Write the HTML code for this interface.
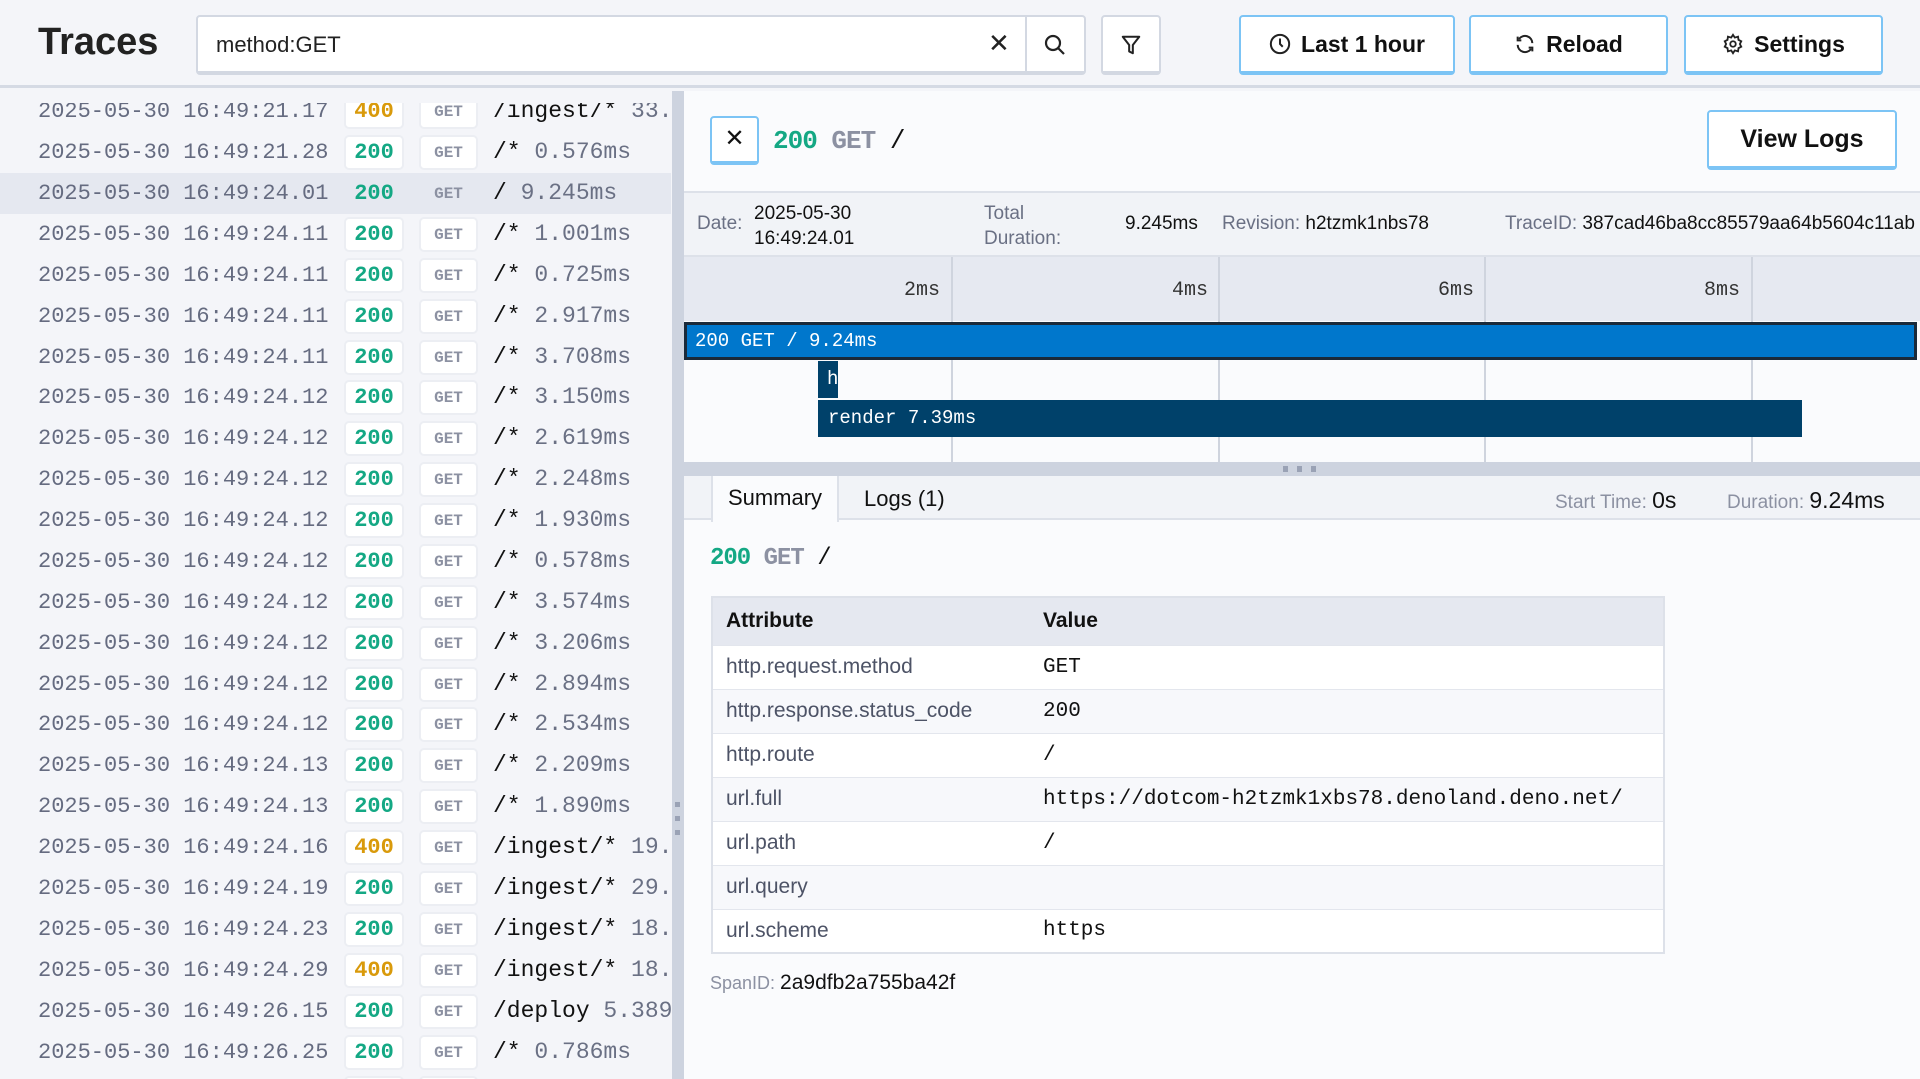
<!DOCTYPE html>
<html><head><meta charset="utf-8"><style>
*{box-sizing:border-box;margin:0;padding:0}
body{width:1920px;height:1079px;overflow:hidden;background:#f4f5f9;font-family:"Liberation Sans",sans-serif;color:#111;position:relative}
.abs{position:absolute}
.mono{font-family:"Liberation Mono",monospace}
.hdr{left:0;top:0;width:1920px;height:88px;background:#f4f5f9;border-bottom:3px solid #d5dae4}
.btn{position:absolute;top:15px;height:60px;background:#fff;border:2px solid #7cc4f5;border-bottom-width:4px;border-radius:4px;font-weight:bold;font-size:23px;display:flex;align-items:center;justify-content:center;gap:10px;color:#111}
.row{position:absolute;left:0;width:671px;height:41px}
.row .ts{position:absolute;left:38px;top:8px;font-size:22px;color:#656b80}
.badge{position:absolute;top:3px;height:35px;background:#fff;border:2px solid #eceef3;border-radius:5px;display:flex;align-items:center;justify-content:center;font-weight:bold}
.st{left:344px;width:60px;font-size:22px;color:#14a884}
.st.w{color:#d99a0b}
.mt{left:419px;width:59px;font-size:16px;color:#8c91a2}
.path{position:absolute;left:493px;top:7px;font-size:23px;color:#111;white-space:nowrap}
.path span{color:#6a7084}
.info{font-size:19px;color:#6a7084}
.info b{font-weight:normal;color:#111}
td{height:44px;border-top:1px solid #e3e6ed;font-size:21px;padding-left:13px}
</style></head><body>
<div class="abs hdr"></div>
<div class="abs" style="left:38px;top:21px;font-size:38px;font-weight:bold;color:#222">Traces</div>
<div class="abs" style="left:196px;top:15px;width:890px;height:60px;background:#fff;border:2px solid #d3d8e2;border-bottom-width:4px;border-radius:4px"></div>
<div class="abs" style="left:216px;top:32px;font-size:22px;color:#222">method:GET</div>
<div class="abs" style="left:988px;top:28px;font-size:26px;color:#222">✕</div>
<div class="abs" style="left:1025px;top:15px;width:2px;height:60px;background:#d3d8e2"></div>
<svg class="abs" style="left:1043px;top:33px" width="24" height="24" viewBox="0 0 24 24" fill="none" stroke="#222" stroke-width="2.2"><circle cx="10" cy="10" r="7"/><path d="M15 15l6 6"/></svg>
<div class="abs" style="left:1101px;top:15px;width:60px;height:60px;background:#fff;border:2px solid #d3d8e2;border-bottom-width:4px;border-radius:4px"></div>
<svg class="abs" style="left:1120px;top:34px" width="22" height="22" viewBox="0 0 24 24" fill="none" stroke="#222" stroke-width="2.2" stroke-linejoin="round"><path d="M3 3h18l-7 9v9l-4-2v-7z"/></svg>
<div class="btn" style="left:1239px;width:216px"><svg width="22" height="22" viewBox="0 0 24 24" fill="none" stroke="#222" stroke-width="2.2"><circle cx="12" cy="12" r="10"/><path d="M12 6v6l3 3"/></svg>Last 1 hour</div>
<div class="btn" style="left:1469px;width:199px"><svg width="22" height="22" viewBox="0 0 24 24" fill="none" stroke="#222" stroke-width="2.2"><path d="M20 11a8 8 0 0 0-14.5-4.5M4 4v4h4M4 13a8 8 0 0 0 14.5 4.5M20 20v-4h-4"/></svg>Reload</div>
<div class="btn" style="left:1684px;width:199px"><svg width="22" height="22" viewBox="0 0 24 24" fill="none" stroke="#222" stroke-width="2"><circle cx="12" cy="12" r="3"/><path d="M12 2l2 3 3.5-1 .5 3.5 3 1.5-1.5 3 1.5 3-3 1.5-.5 3.5-3.5-1-2 3-2-3-3.5 1-.5-3.5-3-1.5 1.5-3-1.5-3 3-1.5.5-3.5 3.5 1z"/></svg>Settings</div>

<!-- left list -->
<div class="abs" style="left:0;top:91px;width:671px;height:988px;overflow:hidden">
<div style="position:relative;top:-89px">
<div class="row" style="top:89px"><div class="ts mono">2025-05-30 16:49:21.17</div><div class="badge st w mono">400</div><div class="badge mt mono">GET</div><div class="path mono">/ingest/* <span>33.</span></div></div>
<div class="row" style="top:130px"><div class="ts mono">2025-05-30 16:49:21.28</div><div class="badge st mono">200</div><div class="badge mt mono">GET</div><div class="path mono">/* <span>0.576ms</span></div></div>
<div class="row" style="top:171px;background:#e5e8f0"><div class="ts mono">2025-05-30 16:49:24.01</div><div class="badge st mono" style="background:#e5e8f0;border-color:#e5e8f0">200</div><div class="badge mt mono" style="background:#e5e8f0;border-color:#e5e8f0">GET</div><div class="path mono">/ <span>9.245ms</span></div></div>
<div class="row" style="top:212px"><div class="ts mono">2025-05-30 16:49:24.11</div><div class="badge st mono">200</div><div class="badge mt mono">GET</div><div class="path mono">/* <span>1.001ms</span></div></div>
<div class="row" style="top:253px"><div class="ts mono">2025-05-30 16:49:24.11</div><div class="badge st mono">200</div><div class="badge mt mono">GET</div><div class="path mono">/* <span>0.725ms</span></div></div>
<div class="row" style="top:294px"><div class="ts mono">2025-05-30 16:49:24.11</div><div class="badge st mono">200</div><div class="badge mt mono">GET</div><div class="path mono">/* <span>2.917ms</span></div></div>
<div class="row" style="top:335px"><div class="ts mono">2025-05-30 16:49:24.11</div><div class="badge st mono">200</div><div class="badge mt mono">GET</div><div class="path mono">/* <span>3.708ms</span></div></div>
<div class="row" style="top:375px"><div class="ts mono">2025-05-30 16:49:24.12</div><div class="badge st mono">200</div><div class="badge mt mono">GET</div><div class="path mono">/* <span>3.150ms</span></div></div>
<div class="row" style="top:416px"><div class="ts mono">2025-05-30 16:49:24.12</div><div class="badge st mono">200</div><div class="badge mt mono">GET</div><div class="path mono">/* <span>2.619ms</span></div></div>
<div class="row" style="top:457px"><div class="ts mono">2025-05-30 16:49:24.12</div><div class="badge st mono">200</div><div class="badge mt mono">GET</div><div class="path mono">/* <span>2.248ms</span></div></div>
<div class="row" style="top:498px"><div class="ts mono">2025-05-30 16:49:24.12</div><div class="badge st mono">200</div><div class="badge mt mono">GET</div><div class="path mono">/* <span>1.930ms</span></div></div>
<div class="row" style="top:539px"><div class="ts mono">2025-05-30 16:49:24.12</div><div class="badge st mono">200</div><div class="badge mt mono">GET</div><div class="path mono">/* <span>0.578ms</span></div></div>
<div class="row" style="top:580px"><div class="ts mono">2025-05-30 16:49:24.12</div><div class="badge st mono">200</div><div class="badge mt mono">GET</div><div class="path mono">/* <span>3.574ms</span></div></div>
<div class="row" style="top:621px"><div class="ts mono">2025-05-30 16:49:24.12</div><div class="badge st mono">200</div><div class="badge mt mono">GET</div><div class="path mono">/* <span>3.206ms</span></div></div>
<div class="row" style="top:662px"><div class="ts mono">2025-05-30 16:49:24.12</div><div class="badge st mono">200</div><div class="badge mt mono">GET</div><div class="path mono">/* <span>2.894ms</span></div></div>
<div class="row" style="top:702px"><div class="ts mono">2025-05-30 16:49:24.12</div><div class="badge st mono">200</div><div class="badge mt mono">GET</div><div class="path mono">/* <span>2.534ms</span></div></div>
<div class="row" style="top:743px"><div class="ts mono">2025-05-30 16:49:24.13</div><div class="badge st mono">200</div><div class="badge mt mono">GET</div><div class="path mono">/* <span>2.209ms</span></div></div>
<div class="row" style="top:784px"><div class="ts mono">2025-05-30 16:49:24.13</div><div class="badge st mono">200</div><div class="badge mt mono">GET</div><div class="path mono">/* <span>1.890ms</span></div></div>
<div class="row" style="top:825px"><div class="ts mono">2025-05-30 16:49:24.16</div><div class="badge st w mono">400</div><div class="badge mt mono">GET</div><div class="path mono">/ingest/* <span>19.</span></div></div>
<div class="row" style="top:866px"><div class="ts mono">2025-05-30 16:49:24.19</div><div class="badge st mono">200</div><div class="badge mt mono">GET</div><div class="path mono">/ingest/* <span>29.</span></div></div>
<div class="row" style="top:907px"><div class="ts mono">2025-05-30 16:49:24.23</div><div class="badge st mono">200</div><div class="badge mt mono">GET</div><div class="path mono">/ingest/* <span>18.</span></div></div>
<div class="row" style="top:948px"><div class="ts mono">2025-05-30 16:49:24.29</div><div class="badge st w mono">400</div><div class="badge mt mono">GET</div><div class="path mono">/ingest/* <span>18.</span></div></div>
<div class="row" style="top:989px"><div class="ts mono">2025-05-30 16:49:26.15</div><div class="badge st mono">200</div><div class="badge mt mono">GET</div><div class="path mono">/deploy <span>5.389</span></div></div>
<div class="row" style="top:1030px"><div class="ts mono">2025-05-30 16:49:26.25</div><div class="badge st mono">200</div><div class="badge mt mono">GET</div><div class="path mono">/* <span>0.786ms</span></div></div>
<div class="row" style="top:1071px"><div class="badge st mono"></div><div class="badge mt mono"></div></div>
</div></div>
<div class="abs" style="left:0;top:91px;width:671px;height:12px;background:#f4f5f9"></div>
<div class="abs" style="left:672px;top:91px;width:12px;height:988px;background:#cdd3df"></div>
<div class="abs" style="left:675px;top:802px;width:5px;height:5px;background:#9aa2b5;box-shadow:0 14px 0 #9aa2b5,0 28px 0 #9aa2b5"></div>

<!-- right panel -->
<div class="abs" style="left:684px;top:91px;width:1236px;height:988px;background:#fafbfd"></div>
<div class="abs" style="left:710px;top:116px;width:49px;height:49px;background:#fff;border:2px solid #7cc4f5;border-bottom-width:4px;border-radius:4px;text-align:center;font-size:24px;line-height:42px">✕</div>
<div class="abs mono" style="left:773px;top:126px;font-size:26px;font-weight:bold;color:#14a884;letter-spacing:-1px">200 <span style="color:#8c91a2">GET</span> <span style="color:#111;font-weight:normal">/</span></div>
<div class="abs" style="left:1707px;top:110px;width:190px;height:60px;background:#fff;border:2px solid #7cc4f5;border-bottom-width:4px;border-radius:4px;font-size:25px;font-weight:bold;text-align:center;line-height:54px">View Logs</div>
<div class="abs" style="left:684px;top:191px;width:1236px;height:66px;background:#f1f3f7;border-top:2px solid #dde1e9;border-bottom:2px solid #dde1e9"></div>
<div class="abs info" style="left:697px;top:213px">Date:</div>
<div class="abs info" style="left:754px;top:201px;line-height:25px"><b>2025-05-30<br>16:49:24.01</b></div>
<div class="abs info" style="left:984px;top:201px;line-height:25px">Total<br>Duration:</div>
<div class="abs info" style="left:1125px;top:213px"><b>9.245ms</b></div>
<div class="abs info" style="left:1222px;top:213px">Revision: <b>h2tzmk1nbs78</b></div>
<div class="abs info" style="left:1505px;top:213px">TraceID: <b>387cad46ba8cc85579aa64b5604c11ab</b></div>
<!-- timeline -->
<div class="abs" style="left:684px;top:257px;width:1236px;height:64px;background:#e6e9f1"></div>
<div class="abs" style="left:951px;top:257px;width:2px;height:205px;background:#cfd4de"></div>
<div class="abs" style="left:1218px;top:257px;width:2px;height:205px;background:#cfd4de"></div>
<div class="abs" style="left:1484px;top:257px;width:2px;height:205px;background:#cfd4de"></div>
<div class="abs" style="left:1751px;top:257px;width:2px;height:205px;background:#cfd4de"></div>
<div class="abs mono" style="left:904px;top:279px;font-size:20px;color:#333">2ms</div>
<div class="abs mono" style="left:1172px;top:279px;font-size:20px;color:#333">4ms</div>
<div class="abs mono" style="left:1438px;top:279px;font-size:20px;color:#333">6ms</div>
<div class="abs mono" style="left:1704px;top:279px;font-size:20px;color:#333">8ms</div>
<div class="abs mono" style="left:684px;top:322px;width:1233px;height:38px;background:#0077cc;border:3px solid #1a2a3a;color:#fff;font-size:19px;line-height:32px;padding-left:8px">200 GET / 9.24ms</div>
<div class="abs mono" style="left:818px;top:361px;width:20px;height:37px;background:#00416a;color:#fff;font-size:19px;line-height:37px;padding-left:9px;overflow:hidden">h</div>
<div class="abs mono" style="left:818px;top:400px;width:984px;height:37px;background:#00416a;color:#fff;font-size:19px;line-height:37px;padding-left:10px">render 7.39ms</div>
<div class="abs" style="left:684px;top:462px;width:1236px;height:14px;background:#cdd3df"></div>
<div class="abs" style="left:1283px;top:466px;width:5px;height:6px;background:#9aa2b5;box-shadow:14px 0 0 #9aa2b5,28px 0 0 #9aa2b5"></div>
<div class="abs" style="left:684px;top:476px;width:1236px;height:44px;background:#f1f3f7;border-bottom:2px solid #dde1e9"></div>
<div class="abs" style="left:711px;top:476px;width:128px;height:46px;background:#fafbfd;border-left:2px solid #dde1e9;border-right:2px solid #dde1e9;font-size:22px;text-align:center;line-height:44px">Summary</div>
<div class="abs" style="left:864px;top:486px;font-size:22px">Logs (1)</div>
<div class="abs" style="left:1555px;top:487px;font-size:19px;color:#8c91a2">Start Time: <span style="color:#111;font-size:23px">0s</span></div>
<div class="abs" style="left:1727px;top:487px;font-size:19px;color:#8c91a2">Duration: <span style="color:#111;font-size:23px">9.24ms</span></div>
<div class="abs mono" style="left:710px;top:545px;font-size:24px;font-weight:bold;color:#14a884;letter-spacing:-1px">200 <span style="color:#8c91a2">GET</span> <span style="color:#111;font-weight:normal">/</span></div>
<table class="abs" style="left:711px;top:596px;width:954px;border-collapse:collapse;border:2px solid #dde1e9;background:#fff">
<tr style="background:#e5e8f0"><td style="height:48px;font-weight:bold;width:318px;border:none">Attribute</td><td style="height:48px;font-weight:bold;border:none">Value</td></tr>
<tr><td style="color:#4d5366">http.request.method</td><td class="mono">GET</td></tr>
<tr style="background:#f7f8fb"><td style="color:#4d5366">http.response.status_code</td><td class="mono">200</td></tr>
<tr><td style="color:#4d5366">http.route</td><td class="mono">/</td></tr>
<tr style="background:#f7f8fb"><td style="color:#4d5366">url.full</td><td class="mono">https://dotcom-h2tzmk1xbs78.denoland.deno.net/</td></tr>
<tr><td style="color:#4d5366">url.path</td><td class="mono">/</td></tr>
<tr style="background:#f7f8fb"><td style="color:#4d5366">url.query</td><td class="mono"></td></tr>
<tr><td style="color:#4d5366">url.scheme</td><td class="mono">https</td></tr>
</table>
<div class="abs" style="left:710px;top:971px;font-size:18px;color:#8c91a2">SpanID: <span style="color:#111;font-size:21px">2a9dfb2a755ba42f</span></div>
</body></html>
